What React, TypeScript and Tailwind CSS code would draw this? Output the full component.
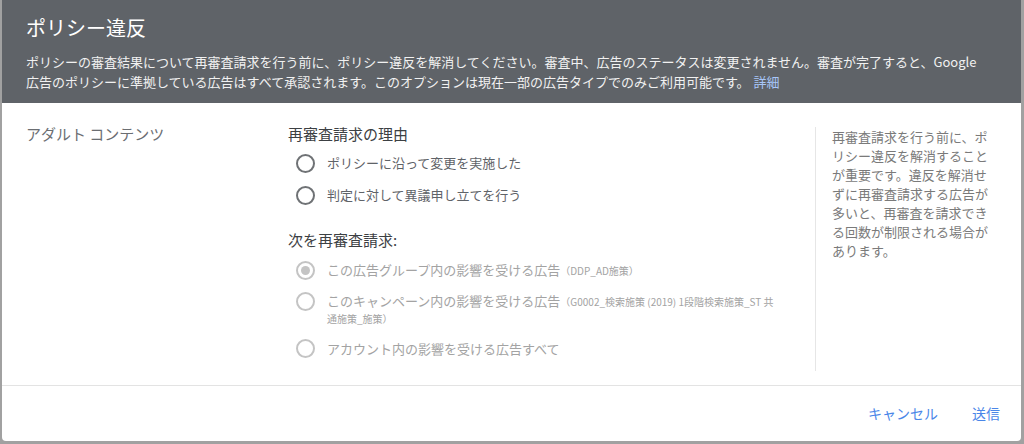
import React from 'react'

const font = { fontFamily: '"Noto Sans CJK JP", "Noto Sans", sans-serif' }

function Radio({ checked = false, disabled = false }: { checked?: boolean; disabled?: boolean }) {
  const ring = disabled ? 'border-[#c4c4c4]' : 'border-[#6f7275]'
  return (
    <span className={`w-[19px] h-[19px] rounded-full border-2 ${ring} flex items-center justify-center shrink-0`}>
      {checked && <span className="w-[9px] h-[9px] rounded-full bg-[#c4c4c4]" />}
    </span>
  )
}

export default function App() {
  return (
    <div className="w-[1024px] h-[444px] bg-[#a1a1a1] pl-[2px] pr-[3px] pb-[3px] overflow-hidden" style={font}>
      <div className="h-full bg-white rounded-b-[4px] flex flex-col overflow-hidden">
        {/* Header */}
        <div className="bg-[#5f6368] h-[103px] px-[24px] pt-[14px] text-white">
          <h1 className="text-[20px] leading-[28px]">ポリシー違反</h1>
          <p className="mt-[10px] text-[13px] leading-[20px] text-[#f1f1f1] whitespace-nowrap">
            ポリシーの審査結果について再審査請求を行う前に、ポリシー違反を解消してください。審査中、広告のステータスは変更されません。審査が完了すると、Google
            <br />
            広告のポリシーに準拠している広告はすべて承認されます。このオプションは現在一部の広告タイプでのみご利用可能です。
            <span className="text-[#a8c7fa] ml-[4px]">詳細</span>
          </p>
        </div>

        {/* Body */}
        <div className="flex pt-[20px] h-[283px] border-b border-[#e3e3e3]">
          <div className="w-[286px] pl-[24px] text-[15px] leading-[22px] text-[#6b6e72]">アダルト コンテンツ</div>

          <div className="flex-1 pr-[20px]">
            <div className="text-[15px] leading-[22px] text-[#3c4043]">再審査請求の理由</div>
            <div className="mt-[8px] flex flex-col gap-[12px] pl-[8px] text-[13px] leading-[20px] text-[#5f6368]">
              <label className="flex items-center gap-[12px]">
                <Radio />
                ポリシーに沿って変更を実施した
              </label>
              <label className="flex items-center gap-[12px]">
                <Radio />
                判定に対して異議申し立てを行う
              </label>
            </div>

            <div className="mt-[24px] text-[15px] leading-[22px] text-[#3c4043]">次を再審査請求:</div>
            <div className="mt-[10px] flex flex-col gap-[12px] pl-[8px] text-[13px] leading-[16px] text-[#a3a3a3]">
              <label className="flex items-center gap-[12px]">
                <Radio checked disabled />
                <span>
                  この広告グループ内の影響を受ける広告
                  <span className="text-[10px]">（DDP_AD施策）</span>
                </span>
              </label>
              <label className="flex items-start gap-[12px]">
                <Radio disabled />
                <span className="w-[450px] pt-[1px]">
                  このキャンペーン内の影響を受ける広告
                  <span className="text-[10px]">（G0002_検索施策 (2019) 1段階検索施策_ST 共通施策_施策）</span>
                </span>
              </label>
              <label className="flex items-center gap-[12px]">
                <Radio disabled />
                アカウント内の影響を受ける広告すべて
              </label>
            </div>
          </div>

          <div className="w-[206px] mt-[4px] mb-[14px] border-l border-[#e6e6e6] pl-[16px]">
            <p className="w-[164px] text-[13px] leading-[19px] text-[#7a7a7a]">
              再審査請求を行う前に、ポリシー違反を解消することが重要です。違反を解消せずに再審査請求する広告が多いと、再審査を請求できる回数が制限される場合があります。
            </p>
          </div>
        </div>

        {/* Footer */}
        <div className="flex-1 flex items-center justify-end pr-[13px] gap-[18px] text-[14px] text-[#4a86e8]">
          <button className="px-[8px] py-[6px]">キャンセル</button>
          <button className="px-[8px] py-[6px]">送信</button>
        </div>
      </div>
    </div>
  )
}
